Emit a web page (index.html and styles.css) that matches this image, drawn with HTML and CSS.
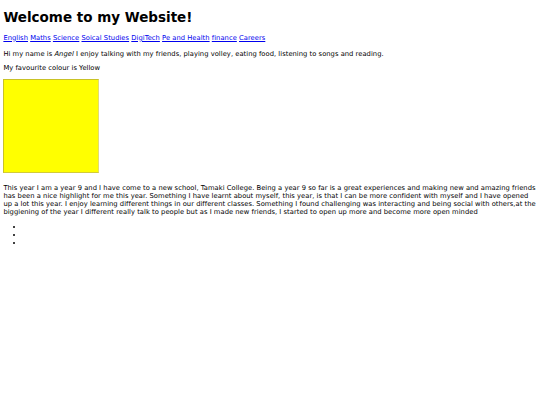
FILE: index.html
```html
<!DOCTYPE html>
<html>
<head>
<meta charset="utf-8">
<title>Welcome</title>
<link rel="stylesheet" href="styles.css">
</head>
<body>
<h1 class="title">Welcome to my Website!</h1>
<a href="#" class="link">English</a> <a href="#" class="link">Maths</a> <a href="#" class="link">Science</a> <a href="#" class="link">Soical Studies</a> <a href="#" class="link">DigiTech</a> <a href="#" class="link">Pe and Health</a> <a href="#" class="link">finance</a> <a href="#" class="link">Careers</a>
<p class="text intro">Hi my name is <em>Angel</em> I enjoy talking with my friends, playing volley, eating food, listening to songs and reading.</p>
<p class="text">My favourite colour is Yellow</p>
<div class="box"></div>
<p class="text story">This year I am a year 9 and I have come to a new school, Tamaki College. Being a year 9 so far is a great experiences and making new and amazing friends has been a nice highlight for me this year. Something I have learnt about myself, this year, is that I can be more confident with myself and I have opened up a lot this year. I enjoy learning different things in our different classes. Something I found challenging was interacting and being social with others,at the biggiening of the year I different really talk to people but as I made new friends, I started to open up more and become more open minded</p>
<ul class="list">
<li class="item"></li>
<li class="item"></li>
<li class="item"></li>
</ul>
</body>
</html>
```
FILE: styles.css
```css
html { background: #fff; }
body {
  margin: 3.375px;
  font-family: "DejaVu Sans", Verdana, sans-serif;
  font-size: 6.75px;
  line-height: 8.1px;
  letter-spacing: 0.03px;
  color: #000;
}
.title {
  font-size: 13.5px;
  line-height: 16.4px;
  font-weight: bold;
  letter-spacing: 0;
  margin: 6px 0 8px;
}
.link { color: #0000ee; }
.text { margin: 6.75px 0; }
.intro { margin-top: 7.75px; }
.box {
  box-sizing: border-box;
  width: 95.5px;
  height: 94px;
  background: #ffff00;
  border-style: solid;
  border-width: 1px;
  border-color: #c9c226 #e2dc70 #d2cb3a #c9c226;
}
.story {
  margin-top: 11px;
  line-height: 8px;
}
.list {
  margin: 4.75px 0;
  padding-left: 21px;
}
.item { height: 8.1px; }
```
